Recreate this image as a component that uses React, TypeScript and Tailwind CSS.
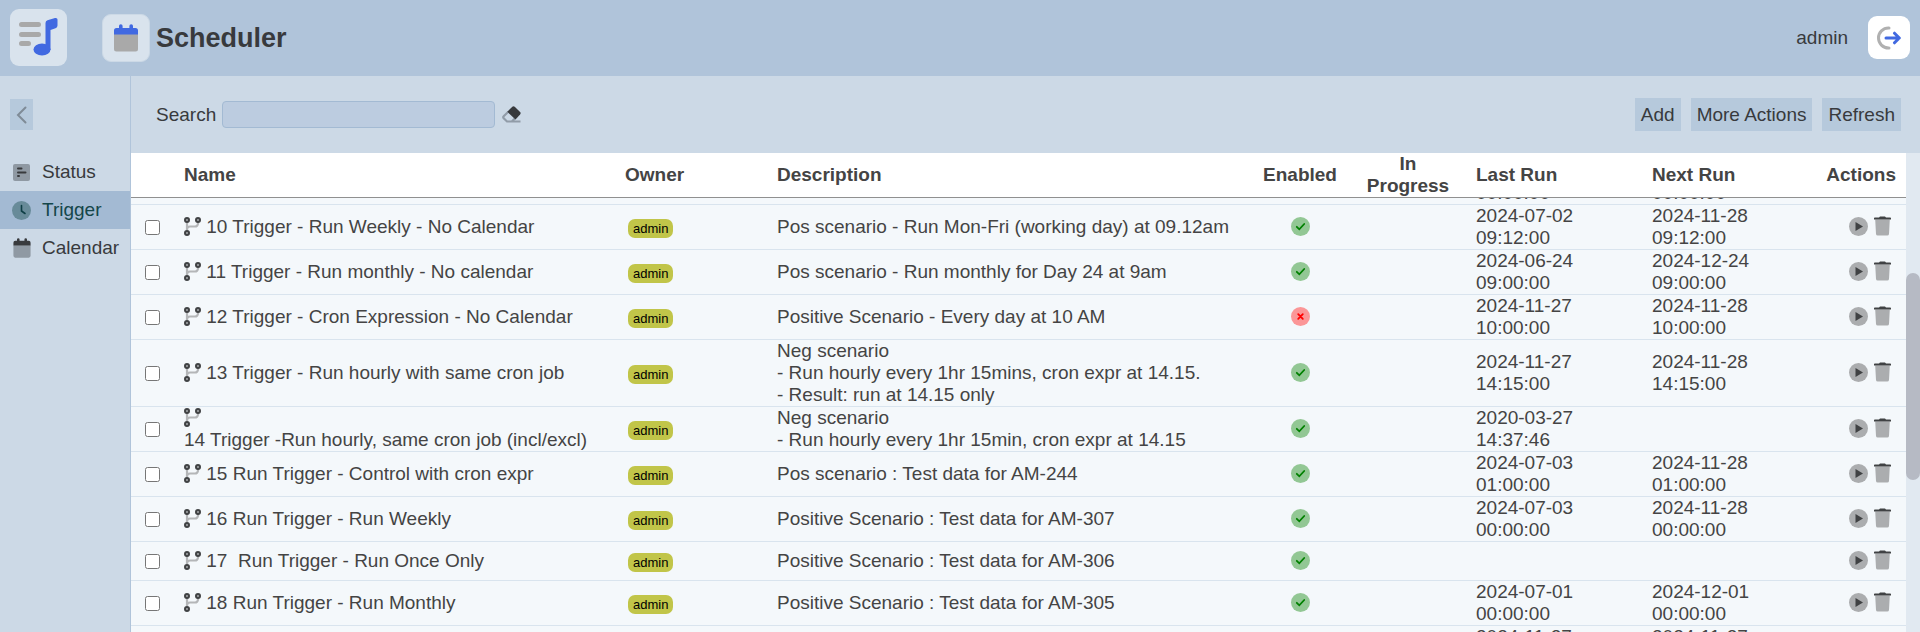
import { useLayoutEffect, useRef, type ReactNode } from 'react';

type Trigger = {
  name: string;
  description: string;
  enabled: boolean;
  lastRun: string;
  nextRun: string;
};

const TRIGGERS: Trigger[] = [
  { name: '', description: '', enabled: true, lastRun: '2024-11-27 00:00:00', nextRun: '2024-11-28 00:00:00' },
  { name: '10 Trigger - Run Weekly - No Calendar', description: 'Pos scenario - Run Mon-Fri (working day) at 09.12am', enabled: true, lastRun: '2024-07-02 09:12:00', nextRun: '2024-11-28 09:12:00' },
  { name: '11 Trigger - Run monthly - No calendar', description: 'Pos scenario - Run monthly for Day 24 at 9am', enabled: true, lastRun: '2024-06-24 09:00:00', nextRun: '2024-12-24 09:00:00' },
  { name: '12 Trigger - Cron Expression - No Calendar', description: 'Positive Scenario - Every day at 10 AM', enabled: false, lastRun: '2024-11-27 10:00:00', nextRun: '2024-11-28 10:00:00' },
  { name: '13 Trigger - Run hourly with same cron job', description: 'Neg scenario\n- Run hourly every 1hr 15mins, cron expr at 14.15.\n- Result: run at 14.15 only', enabled: true, lastRun: '2024-11-27 14:15:00', nextRun: '2024-11-28 14:15:00' },
  { name: '14 Trigger -Run hourly, same cron job (incl/excl)', description: 'Neg scenario\n- Run hourly every 1hr 15min, cron expr at 14.15', enabled: true, lastRun: '2020-03-27 14:37:46', nextRun: '' },
  { name: '15 Run Trigger - Control with cron expr', description: 'Pos scenario : Test data for AM-244', enabled: true, lastRun: '2024-07-03 01:00:00', nextRun: '2024-11-28 01:00:00' },
  { name: '16 Run Trigger - Run Weekly', description: 'Positive Scenario : Test data for AM-307', enabled: true, lastRun: '2024-07-03 00:00:00', nextRun: '2024-11-28 00:00:00' },
  { name: '17  Run Trigger - Run Once Only', description: 'Positive Scenario : Test data for AM-306', enabled: true, lastRun: '', nextRun: '' },
  { name: '18 Run Trigger - Run Monthly', description: 'Positive Scenario : Test data for AM-305', enabled: true, lastRun: '2024-07-01 00:00:00', nextRun: '2024-12-01 00:00:00' },
  { name: '', description: '', enabled: true, lastRun: '2024-11-27 00:00:00', nextRun: '2024-11-27 00:00:00' },
];

function LogoIcon() {
  return (
    <svg width="39" height="39" viewBox="0 0 39 39" aria-hidden="true">
      <g stroke="#a9a9a9" strokeWidth="5" strokeLinecap="round">
        <path d="M2.5 6.5h17M2.5 16.5h17M2.5 25.5h7" />
      </g>
      <ellipse cx="23" cy="31.500" rx="8.500" ry="6" fill="#4169e1" />
      <path d="M26.500 32V5q0-2 2-2.700l7.500-2.200q2.500-.4 2.500 1.500v6q0 2-2 2.700l-5 1.700V32z" fill="#4169e1" />
    </svg>
  );
}

function CalendarIcon({ size, top, body }: { size: number; top: string; body: string }) {
  return (
    <svg width={size} height={size} viewBox="0 0 28 28" aria-hidden="true">
      <path d="M2 10h24v15a2.500 2.500 0 0 1-2.500 2.500h-19A2.500 2.500 0 0 1 2 25z" fill={body} />
      <path d="M2 10.500V6.500A2.500 2.500 0 0 1 4.500 4H7V2a1.800 1.800 0 0 1 3.600 0v2h6.800V2A1.800 1.800 0 0 1 21 2v2h2.500A2.500 2.500 0 0 1 26 6.500v4z" fill={top} />
    </svg>
  );
}

function LogoutIcon() {
  return (
    <svg width="24" height="24" viewBox="0 0 24 24" fill="none" strokeLinecap="round" aria-hidden="true">
      <path d="M12 2h-.5a10 10 0 0 0 0 20h.5" stroke="#b0b0b0" strokeWidth="3" />
      <path d="M9 12h13M17.500 7.200L22.300 12l-4.800 4.800" stroke="#4169e1" strokeWidth="3" strokeLinejoin="round" />
    </svg>
  );
}

function StatusIcon() {
  return (
    <svg width="19" height="19" viewBox="0 0 19 19" aria-hidden="true">
      <rect x="1" y="1" width="17" height="17" rx="2" fill="#8f99a3" />
      <path d="M6 5.500h3.500M6 9.500h7.500M6 13h1" stroke="#383a3d" strokeWidth="2" strokeLinecap="round" />
    </svg>
  );
}

function ClockIcon() {
  return (
    <svg width="19" height="19" viewBox="0 0 19 19" aria-hidden="true">
      <circle cx="9.500" cy="9.500" r="9.500" fill="#688b99" />
      <path d="M9.500 4.500v5.500l3.500 2.500" fill="none" stroke="#0f3f46" strokeWidth="1.600" strokeLinecap="round" />
    </svg>
  );
}

function EraserIcon() {
  return (
    <svg width="19" height="17" viewBox="0 0 19 17" aria-hidden="true">
      <path d="M6.300 5.800L1.700 10.300q-1 1 0 2L5 15.500h13.500M12.800 12.500l-3 3" fill="none" stroke="#919ca8" strokeWidth="2.200" />
      <path d="M5.300 5.800L10.300.8q1.200-1.100 2.400 0l5.400 5.300q1.100 1.200 0 2.400L13.500 13.500z" fill="#383a3d" />
    </svg>
  );
}

function BranchIcon() {
  return (
    <svg className="inline-block align-[-3px]" width="17" height="19" viewBox="0 0 17 19" fill="none" aria-hidden="true">
      <path d="M3 5v8.500M14 5v1.500a3 3 0 0 1-3 3H6a3 3 0 0 0-3 3" stroke="#b4b6b8" strokeWidth="2.200" />
      <g stroke="#404244" strokeWidth="2.200">
        <circle cx="3" cy="3" r="1.900" />
        <circle cx="14" cy="3" r="1.900" />
        <circle cx="3" cy="16" r="1.900" />
      </g>
    </svg>
  );
}

function EnabledIcon({ enabled }: { enabled: boolean }) {
  return (
    <svg className="mx-auto block" width="19" height="19" viewBox="0 0 19 19" role="img" aria-label={enabled ? 'Enabled' : 'Disabled'}>
      <circle cx="9.500" cy="9.500" r="9.500" fill={enabled ? '#92c794' : '#fb9697'} />
      {enabled ? (
        <path d="M5.800 9.800l2.500 2.500L13.200 7" fill="none" stroke="#008000" strokeWidth="1.800" strokeLinecap="round" />
      ) : (
        <path d="M7.200 7.200l4.600 4.600M11.800 7.200l-4.600 4.600" stroke="#ff0000" strokeWidth="1.800" strokeLinecap="round" />
      )}
    </svg>
  );
}

function PlayIcon() {
  return (
    <svg width="19" height="19" viewBox="0 0 19 19" aria-hidden="true">
      <circle cx="9.500" cy="9.500" r="9.500" fill="#abadaf" />
      <path d="M6.500 5v9l7.500-4.500z" fill="#404244" />
    </svg>
  );
}

function TrashIcon() {
  return (
    <svg width="17" height="20" viewBox="0 0 17 20" aria-hidden="true">
      <path d="M1.200 3.500h14.600l-.8 14.500a1.800 1.800 0 0 1-1.800 1.600H3.800A1.800 1.800 0 0 1 2 18z" fill="#abadaf" />
      <path d="M.8 1.500H5L6 .4h5l1 1.100h4.200a.8.8 0 0 1 .8.800v1.200H0V2.300a.8.8 0 0 1 .8-.8z" fill="#404244" />
    </svg>
  );
}

function NavItem({ icon, label, active = false }: { icon: ReactNode; label: string; active?: boolean }) {
  return (
    <a
      href="#"
      aria-current={active ? 'page' : undefined}
      className={`flex h-[38px] items-center pl-3 ${active ? 'bg-[#a3bad3] text-[#14464a]' : ''}`}
    >
      <span className="flex w-[30px] shrink-0">{icon}</span>
      {label}
    </a>
  );
}

function ToolbarButton({ children }: { children: ReactNode }) {
  return <button className="h-[33px] bg-[#b6c9dc] px-[6px]">{children}</button>;
}

// shared by the header table and the scrolling body table
function Columns() {
  return (
    <colgroup>
      <col className="w-[49px]" />
      <col className="w-[441px]" />
      <col className="w-[152px]" />
      <col />
      <col className="w-[88px]" />
      <col className="w-[128px]" />
      <col className="w-[176px]" />
      <col className="w-[148px]" />
      <col className="w-[110px]" />
    </colgroup>
  );
}

function TriggerRow({ trigger }: { trigger: Trigger }) {
  return (
    <tr className="*:h-[39px] *:border-b *:border-[#d9e4ee] *:px-1">
      <td>
        <input type="checkbox" aria-label={`Select ${trigger.name}`} className="ml-[10px] block size-[15px]" />
      </td>
      <td className="pr-4!">
        <BranchIcon /> <span className="inline-block whitespace-pre">{trigger.name}</span>
      </td>
      <td>
        <span className="mx-[3px] mt-[2px] block w-fit rounded-[7px] bg-[#c1c549] px-[5px] text-[13px] leading-[19px] text-black">admin</span>
      </td>
      <td className="whitespace-pre-line">{trigger.description}</td>
      <td className="pb-[2px]">
        <EnabledIcon enabled={trigger.enabled} />
      </td>
      <td />
      <td>{trigger.lastRun}</td>
      <td>{trigger.nextRun}</td>
      <td className="pb-[2px]">
        <div className="flex items-center justify-end gap-[6px] pr-[11px]">
          <button aria-label="Run now"><PlayIcon /></button>
          <button aria-label="Delete"><TrashIcon /></button>
        </div>
      </td>
    </tr>
  );
}

export default function App() {
  const listRef = useRef<HTMLDivElement>(null);

  // the list opens part of the way down
  useLayoutEffect(() => {
    if (listRef.current) listRef.current.scrollTop = 38;
  }, []);

  return (
    <div className="flex h-screen flex-col overflow-hidden bg-[#ccd9e6] font-['Liberation_Sans',Arial,sans-serif] text-[19px] leading-[22px] text-[#383a3d]">
      <header className="flex h-[76px] shrink-0 items-center bg-[#b0c4da] px-[10px] pb-px">
        <div className="flex size-[57px] items-center justify-center rounded-[9px] bg-[#d9e3ed]">
          <LogoIcon />
        </div>
        <div className="ml-[35px] flex size-12 items-center justify-center rounded-[9px] border border-[#ccd9e6] bg-[#d9e3ed]">
          <CalendarIcon size={28} top="#4169e1" body="#a9a9a9" />
        </div>
        <h1 className="ml-[6px] text-[27px] leading-8 font-bold">Scheduler</h1>
        <span className="mr-5 ml-auto">admin</span>
        <button aria-label="Log out" className="flex h-[43px] w-[42px] items-center justify-center rounded-[9px] bg-white">
          <LogoutIcon />
        </button>
      </header>

      <div className="flex min-h-0 flex-1">
        <nav className="w-[131px] shrink-0 border-r border-[#b0c4da] pt-[23px]">
          <button aria-label="Collapse menu" className="mb-[23px] ml-[10px] flex h-[31px] w-[23px] items-center justify-center bg-[#b6c9dc]">
            <svg width="11" height="18" viewBox="0 0 11 18" fill="none" aria-hidden="true">
              <path d="M9.500 1.500L2 9l7.500 7.500" stroke="#7f8b97" strokeWidth="2" strokeLinecap="round" />
            </svg>
          </button>
          <NavItem icon={<StatusIcon />} label="Status" />
          <NavItem icon={<ClockIcon />} label="Trigger" active />
          <NavItem icon={<CalendarIcon size={20} top="#383a3d" body="#8f99a3" />} label="Calendar" />
        </nav>

        <main className="flex min-w-0 flex-1 flex-col">
          <div className="flex h-[77px] shrink-0 items-center gap-[10px] pr-[19px] pl-[25px]">
            <label className="flex items-center gap-[6px]">
              Search
              <input type="text" className="h-[27px] w-[273px] rounded-[4px] border border-[#a3bad3] bg-[#bccce0] px-1" />
            </label>
            <button aria-label="Clear search" className="mr-auto -ml-[3px]">
              <EraserIcon />
            </button>
            <ToolbarButton>Add</ToolbarButton>
            <ToolbarButton>More Actions</ToolbarButton>
            <ToolbarButton>Refresh</ToolbarButton>
          </div>

          <div className="flex min-h-0 flex-1">
            <div className="flex min-w-0 flex-1 flex-col text-[#444444]">
              <table className="w-full shrink-0 table-fixed border-separate border-spacing-0 bg-white text-left">
                <Columns />
                <thead>
                  <tr className="*:h-[45px] *:border-b *:border-[#909090] *:px-1">
                    <td />
                    <th>Name</th>
                    <th>Owner</th>
                    <th>Description</th>
                    <th className="text-center">Enabled</th>
                    <th className="text-center">In<br />Progress</th>
                    <th>Last Run</th>
                    <th>Next Run</th>
                    <th className="pr-[10px]! text-right">Actions</th>
                  </tr>
                </thead>
              </table>
              <div ref={listRef} className="min-h-0 flex-1 overflow-y-auto bg-[#f4f8fb] [scrollbar-width:none]">
                <table className="w-full table-fixed border-separate border-spacing-0">
                  <Columns />
                  <tbody>
                    {TRIGGERS.map((t, i) => (
                      <TriggerRow key={i} trigger={t} />
                    ))}
                  </tbody>
                </table>
              </div>
            </div>
            <div className="grid w-[14px] shrink-0 grid-rows-[120fr_207fr_152fr] bg-[#e1e9f1]">
              <div className="row-start-2 rounded-full bg-[#b6bac4]" />
            </div>
          </div>
        </main>
      </div>
    </div>
  );
}
